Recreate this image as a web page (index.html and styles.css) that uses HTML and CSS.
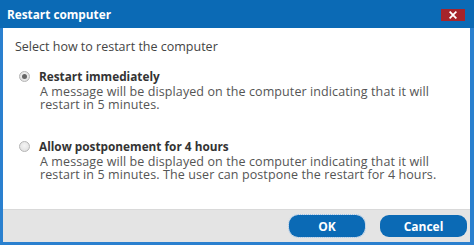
FILE: index.html
```html
<!DOCTYPE html>
<html>
<head>
<meta charset="utf-8">
<link rel="stylesheet" href="styles.css">
</head>
<body>
<div class="dialog">
  <div class="titlebar">
    <span class="title">Restart computer</span>
    <span class="close">
      <svg width="10" height="10" viewBox="0 0 10 10"><path d="M1.5 1.5 L8.5 8.5 M8.5 1.5 L1.5 8.5" stroke="#fff" stroke-width="2.2" stroke-linecap="square"/></svg>
    </span>
  </div>
  <div class="frame">
    <div class="content">
      <div class="prompt">Select how to restart the computer</div>
      <div class="option">
        <div class="option-head">
          <span class="radio checked"></span>
          <span class="option-title">Restart immediately</span>
        </div>
        <div class="option-desc">
          <span class="line">A message will be displayed on the computer indicating that it will</span>
          <span class="line">restart in 5 minutes.</span>
        </div>
      </div>
      <div class="option second">
        <div class="option-head">
          <span class="radio"></span>
          <span class="option-title">Allow postponement for 4 hours</span>
        </div>
        <div class="option-desc">
          <span class="line">A message will be displayed on the computer indicating that it will</span>
          <span class="line">restart in 5 minutes. The user can postpone the restart for 4 hours.</span>
        </div>
      </div>
    </div>
    <div class="footer">
      <button class="btn ok">OK</button>
      <button class="btn cancel">Cancel</button>
    </div>
  </div>
</div>
</body>
</html>
```
FILE: styles.css
```css
html, body {
  margin: 0;
  padding: 0;
  background: #ffffff;
}
.dialog {
  width: 474px;
  height: 245px;
  display: flex;
  flex-direction: column;
  font-family: "Open Sans", "Noto Sans", sans-serif;
}
.titlebar {
  height: 28px;
  background: #0b6ab5;
  display: flex;
  align-items: center;
  justify-content: space-between;
  padding: 0 9px 0 7px;
  flex: none;
}
.title {
  color: #ffffff;
  font-weight: 700;
  font-size: 11.8px;
  margin-top: -1px;
}
.close {
  width: 24px;
  height: 12px;
  background: #a6242b;
  display: flex;
  align-items: center;
  justify-content: center;
  margin-top: 2px;
}
.close svg {
  width: 8px;
  height: 8px;
}
.frame {
  flex: 1;
  display: flex;
  flex-direction: column;
  background: #ffffff;
  border-left: 3px solid #2a80cf;
  border-right: 4px solid #2a80cf;
  border-bottom: 3px solid #2a80cf;
}
.content {
  flex: 1;
  padding: 11px 0 0 11px;
}
.prompt {
  font-size: 12.5px;
  line-height: 16px;
  color: #444;
  padding-left: 1px;
}
.option {
  margin-top: 13px;
  padding-left: 5px;
}
.option.second {
  margin-top: 27px;
}
.option-head {
  display: flex;
  align-items: center;
  height: 16px;
}
.radio {
  width: 9px;
  height: 9px;
  border-radius: 50%;
  border: 1px solid #b5b5b5;
  background: radial-gradient(circle at 50% 40%, #f4f4f4 0%, #dcdcdc 100%);
  box-sizing: content-box;
  display: flex;
  align-items: center;
  justify-content: center;
  flex: none;
}
.radio.checked::after {
  content: "";
  width: 5px;
  height: 5px;
  border-radius: 50%;
  background: #666;
}
.option-title {
  margin-left: 9px;
  font-weight: 700;
  font-size: 11.8px;
  color: #333;
}
.option-desc {
  margin-left: 21px;
  margin-top: 1px;
  display: flex;
  flex-direction: column;
}
.line {
  display: block;
  font-size: 12.5px;
  line-height: 13px;
  height: 13px;
  letter-spacing: 0.1px;
  color: #555;
  white-space: nowrap;
}
.footer {
  height: 33px;
  flex: none;
  background: #e4e4e4;
  border-top: 1px solid #d9d9d9;
  box-sizing: border-box;
  display: flex;
  align-items: center;
  justify-content: flex-end;
  padding-right: 3px;
  gap: 15px;
}
.btn {
  height: 22px;
  border: none;
  border-radius: 9px;
  background: #0b6ab5;
  color: #fff;
  font-family: "Open Sans", "Noto Sans", sans-serif;
  font-weight: 700;
  font-size: 12px;
  padding: 0;
  margin: 0;
}
.btn.ok {
  width: 76px;
  outline: 1px dotted #9fc3ea;
  outline-offset: 0;
}
.btn.cancel {
  width: 87px;
}
```
